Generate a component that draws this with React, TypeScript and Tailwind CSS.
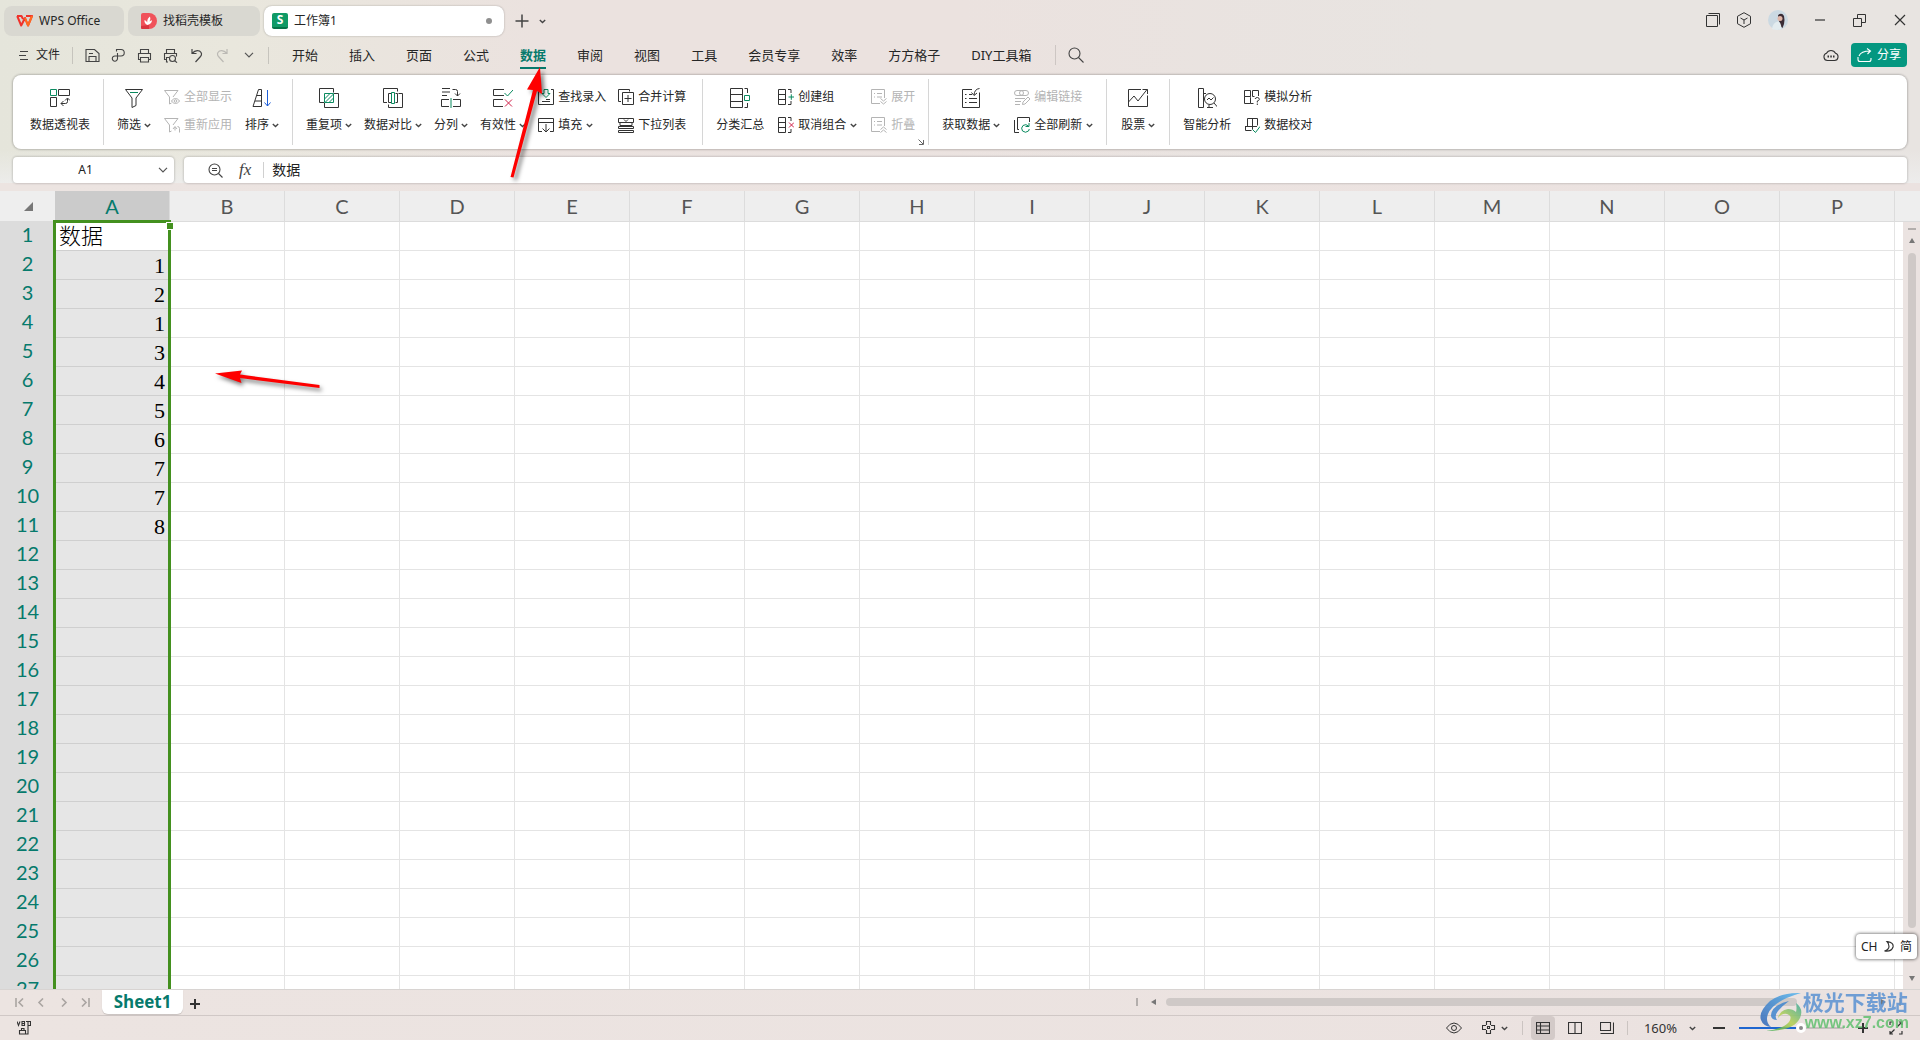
import React from 'react';

const FONT = "font-['Noto_Sans','Noto_Sans_CJK_SC',sans-serif]";
const INK = '#333333';
const GREEN = '#0a8a5f';
const RED = '#cf2149';
const GREY = '#b4b4b4';

type IconProps = { size?: number; color?: string; width?: number; children: React.ReactNode };

const Icon: React.FC<IconProps> = ({ size = 16, color = INK, width = 1, children }) => (
    <svg width={size} height={size} viewBox={`0 0 ${size} ${size}`} fill="none" stroke={color} strokeWidth={width} className="shrink-0" aria-hidden="true">
        {children}
    </svg>
);

const Chevron: React.FC<{ wide?: boolean }> = ({ wide }) =>
    wide ? (
        <svg width="10" height="6" viewBox="0 0 10 6" fill="none" stroke="#555" strokeWidth="1.2" className="shrink-0"><path d="M1 .8l4 4 4-4" /></svg>
    ) : (
        <svg width="7" height="5" viewBox="0 0 7 5" fill="none" stroke="#444" strokeWidth="1.4" className="shrink-0"><path d="M.8 1l2.7 2.5L6.2 1" /></svg>
    );

/* ---------- ribbon icons ---------- */

const PivotIcon = () => (
    <Icon size={20}>
        <path d="M.5 1.5h6v6h-6z" stroke={GREEN} />
        <path d="M8.500 7.500V1.500h11v6h-11M.5 9.500h6v9h-6zM17.500 10.500v3q0 2-2 2h-4.500M15 12.500l2.500-2.500 2.500 2.500M13.500 13l-2.500 2.500 2.500 2.500" />
    </Icon>
);
const FilterIcon = () => (
    <Icon size={20}>
        <path d="M1.500 1.500h17M1.500 1.500l6.500 8.500v9.500l4-2V10l6.500-8.500" />
        <path d="M6 4.500h8" stroke={GREEN} />
    </Icon>
);
const ShowAllIcon = () => (
    <Icon color={GREY}>
        <path d="M.5 1.500h13.500L9 8M.5 1.500L5.500 8v7l2-1" />
        <path d="M7.500 12c2-3.300 6-3.300 8 0-2 3.300-6 3.300-8 0z" /><circle cx="11.500" cy="12" r="1.300" />
    </Icon>
);
const ReapplyIcon = () => (
    <Icon color={GREY}>
        <path d="M.5 1.500h13.500L9 8M.5 1.500L5.500 8v7l2-1M9 12l2-2.500 2 2.500M11 10v3.500M15.500 15.500v-4q0-2-2-2" />
    </Icon>
);
const SortIcon = () => (
    <Icon size={20}>
        <path d="M6.500 1.500h3v17H1zM5 7.500h4.500M3 13h6.500" />
        <path d="M15.500 2v16M12.500 14.500l3 3.500 3-3.500" stroke="#1f5fd8" />
    </Icon>
);
const DuplicateIcon = () => (
    <Icon size={20}>
        <path d="M5 14.500H.5V.500h14v4M15 5.500h4.500v14h-14V15" />
        <path d="M5.500 5.500h9v9h-9zM5.500 11l5.500-5.500M6 14.500l8.500-8.500M10 14.500l4.500-4.500" stroke={GREEN} />
    </Icon>
);
const CompareIcon = () => (
    <Icon size={20}>
        <path d="M4 14.500H.5V.5h14v3M15.500 5.500h4v14h-14v-3M8 5.500H5.500v9H8M12.500 5.500h2v9h-2" />
        <path d="M8.500 4.500h3v11h-3z" stroke={GREEN} />
    </Icon>
);
const SplitIcon = () => (
    <Icon size={20}>
        <path d="M1 .5h8M1 4h8M1 7.500h5M11.500 1.500h3q2 0 2 2v4.500M14 5.500l2.500 2.500L19 5.500M8 11.500H.5v7H8M12 11.500h7.500v7H12" />
        <path d="M10 10v10" stroke={GREEN} />
    </Icon>
);
const ValidityIcon = () => (
    <Icon size={20}>
        <path d="M11 1.500H.5v6H11M10 11.500H.5v7H10" />
        <path d="M11.500 5l3 3L20 2" stroke={GREEN} /><path d="M12 11.500l7 7M19 11.500l-7 7" stroke={RED} />
    </Icon>
);
const LookupIcon = () => (
    <Icon>
        <path d="M3 .5H.5v15h15V.5H13M4 12.500h8M8 10.500h4" />
        <path d="M6 .5h4v4h2L8 8.500 4 4.500h2z" stroke={GREEN} />
    </Icon>
);
const FillIcon = () => (
    <Icon><path d="M4 14.500H.5v-13h15v13H12M.5 5.500h15M8 7v8M4.500 11.500L8 15l3.500-3.500" /></Icon>
);
const ConsolidateIcon = () => (
    <Icon><path d="M3 12.500H.5V.5h11v2M4.500 3.500h11v12h-11zM10 6v7M6.500 9.500h7" /></Icon>
);
const DropListIcon = () => (
    <Icon><path d="M.5 1.500h15v4H.5zM6 2.500l2 2 2-2M2 6v2.500h12V6M.5 9.500h15v2H.5zM.5 13.500h15v2H.5z" /></Icon>
);
const SubtotalIcon = () => (
    <Icon size={20}>
        <path d="M.5.5h12v19H.5zM.5 6.500h12M.5 13.500h12M14.500.5h3V5M14.500 19.500h3V15" />
        <path d="M14.500 7.500h5v5h-5z" stroke={GREEN} />
    </Icon>
);
const GroupIcon = () => (
    <Icon>
        <path d="M.5.5h7v15h-7zM.5 5.500h7M.5 10.500h7M10 .5h3V4M10 15.500h3V12" />
        <path d="M10.500 8h5.500M13.300 5.300v5.500" stroke={GREEN} />
    </Icon>
);
const UngroupIcon = () => (
    <Icon>
        <path d="M.5.5h7v15h-7zM.5 5.500h7M.5 10.500h7M10 .5h3V4M10 15.500h3V12" />
        <path d="M11 5.500l5 5M16 5.500l-5 5" stroke={RED} />
    </Icon>
);
const ExpandIcon = () => (
    <Icon color={GREY}><path d="M9 14.500H.5V.5h13V9M3 4.500h1M6 4.500h5M3 8h1M6 8h5M9.500 9.500l3 2.500 3-2.500M9.500 12.500l3 2.500 3-2.500" /></Icon>
);
const CollapseIcon = () => (
    <Icon color={GREY}><path d="M9 14.500H.5V.5h13V9M3 4.500h1M6 4.500h5M3 8h1M6 8h5M9.500 12.500l3-2.500 3 2.500M9.500 15.500l3-2.500 3 2.500" /></Icon>
);
const GetDataIcon = () => (
    <Icon size={20}><path d="M11 1.500H1.500v18h17V4.500M4 6.500h1.500M4 10.500h1.500M4 14.500h1.500M8 6.500h3M8 10.500h8M8 14.500h8M18.500.5q-5 .5-5.500 6.500M10.500 4.500L13 7.500l3-2.500" /></Icon>
);
const EditLinkIcon = () => (
    <Icon color={GREY}>
        <rect x=".5" y="1.500" width="9" height="5" rx="2.500" /><rect x="5.500" y="1.500" width="9" height="5" rx="2.500" />
        <path d="M1 9.500h10M1 12.500h6M1 15.500h5M8.500 15.500l.5-2.500 5-5 2 2-5 5z" />
    </Icon>
);
const RefreshAllIcon = () => (
    <Icon>
        <path d="M3.500 12.500V.5h12V5M3.500 12.500H5M.500 3v12.500H5" />
        <path d="M14.500 9q-2.500-2.500-5.500-.5-2.500 2.500-.5 5.500 3 2.500 6 0l.8-2M15 6v3.500h-3.500" stroke={GREEN} />
    </Icon>
);
const StockIcon = () => (
    <Icon size={20}><path d="M13 1.500H.5v17h19V7.500M.5 14l5.500-6 4 5L19 1.500M14.500 1.500h5v4.500" /></Icon>
);
const SmartIcon = () => (
    <Icon size={20}>
        <path d="M1.500 19.500V.500h5v19zM6.500 5.500H9M10 19.500h6M12 17v2.500" />
        <circle cx="13" cy="11" r="5.500" /><path d="M17 15l3.500 4M10 12l2-2 2 2 2.500-2.500" />
    </Icon>
);
const SimulateIcon = () => (
    <Icon><path d="M.5 1.500h6v6h-6zM14.500 7V1.500h-6v6h2M.5 9v5.500h6v-6M.5 7.500V9M6.500 7.500v1M6.500 14.500h3M11 10q.5-1.500 2.500-1.500 2 .3 1.800 2-.3 1.200-2 1.500v1.500M13.300 14.500v1.500" /></Icon>
);
const ProofIcon = () => (
    <Icon>
        <path d="M3.500 1.500h10v7M3.500 1.500v8M8.500 1.500v11M1 9.500h12M1.500 9.500v4h6" />
        <path d="M8.500 12.500l3 3 4.500-6" stroke={GREEN} />
    </Icon>
);

/* ---------- ribbon parts ---------- */

const Big: React.FC<{ icon: React.ReactNode; label: string; menu?: boolean }> = ({ icon, label, menu }) => (
    <button className="flex shrink-0 flex-col items-center gap-[9px] pt-[9px]">
        {icon}
        <span className="flex h-4 items-center gap-[3px] whitespace-nowrap leading-4">
            {label}
            {menu && <Chevron />}
        </span>
    </button>
);

const Small: React.FC<{ icon: React.ReactNode; label: string; menu?: boolean; disabled?: boolean }> = ({ icon, label, menu, disabled }) => (
    <button disabled={disabled} className="flex h-4 items-center gap-1 whitespace-nowrap leading-4 disabled:text-[#b4b4b4]">
        {icon}
        {label}
        {menu && <Chevron />}
    </button>
);

const Pair: React.FC<{ children: React.ReactNode }> = ({ children }) => (
    <div className="flex shrink-0 flex-col gap-3 pt-2.5">{children}</div>
);

const Group: React.FC<{ children: React.ReactNode; spacing?: string; last?: boolean }> = ({ children, spacing = 'gap-[13px] px-[13px]', last }) => (
    <div className={`relative flex shrink-0 ${spacing} ${last ? '' : 'border-r border-[#d6d6d6]'}`}>
        {children}
    </div>
);

const Ribbon = () => (
    <section className="mx-[13px] mt-1 flex h-[74px] rounded-lg bg-white py-1 pl-1 text-xs text-[#262626] shadow-[0_0_2px_1px_rgba(0,0,0,0.2)]">
        <Group><Big icon={<PivotIcon />} label="数据透视表" /></Group>
        <Group>
            <Big icon={<FilterIcon />} label="筛选" menu />
            <Pair>
                <Small icon={<ShowAllIcon />} label="全部显示" disabled />
                <Small icon={<ReapplyIcon />} label="重新应用" disabled />
            </Pair>
            <Big icon={<SortIcon />} label="排序" menu />
        </Group>
        <Group spacing="gap-3 pl-[13px] pr-4">
            <Big icon={<DuplicateIcon />} label="重复项" menu />
            <Big icon={<CompareIcon />} label="数据对比" menu />
            <Big icon={<SplitIcon />} label="分列" menu />
            <Big icon={<ValidityIcon />} label="有效性" menu />
            <Pair>
                <Small icon={<LookupIcon />} label="查找录入" />
                <Small icon={<FillIcon />} label="填充" menu />
            </Pair>
            <Pair>
                <Small icon={<ConsolidateIcon />} label="合并计算" />
                <Small icon={<DropListIcon />} label="下拉列表" />
            </Pair>
        </Group>
        <Group spacing="gap-[14px] px-[13px]">
            <Big icon={<SubtotalIcon />} label="分类汇总" />
            <Pair>
                <Small icon={<GroupIcon />} label="创建组" />
                <Small icon={<UngroupIcon />} label="取消组合" menu />
            </Pair>
            <Pair>
                <Small icon={<ExpandIcon />} label="展开" disabled />
                <Small icon={<CollapseIcon />} label="折叠" disabled />
            </Pair>
            <svg className="absolute right-1 bottom-0" width="6" height="6" viewBox="0 0 6 6" fill="none" stroke="#666"><path d="M.5.5l4.500 4.500M5.500 1v4.500H1" /></svg>
        </Group>
        <Group spacing="gap-[14px] px-[13px]">
            <Big icon={<GetDataIcon />} label="获取数据" menu />
            <Pair>
                <Small icon={<EditLinkIcon />} label="编辑链接" disabled />
                <Small icon={<RefreshAllIcon />} label="全部刷新" menu />
            </Pair>
        </Group>
        <Group spacing="px-[14px]"><Big icon={<StockIcon />} label="股票" menu /></Group>
        <Group last>
            <Big icon={<SmartIcon />} label="智能分析" />
            <Pair>
                <Small icon={<SimulateIcon />} label="模拟分析" />
                <Small icon={<ProofIcon />} label="数据校对" />
            </Pair>
        </Group>
    </section>
);

/* ---------- title bar and menu ---------- */

const TitleBar = () => (
    <div className="flex h-10 items-start pl-1 text-xs text-[#262626]">
        <div className="flex items-center gap-1 pt-1.5">
            <button className="flex h-[30px] w-[120px] items-center gap-1.5 rounded-lg bg-[#d9d8d1] pl-3">
                <svg width="17" height="12" viewBox="0 0 17 12" fill="none" stroke="#f0322b" strokeWidth="2" strokeLinejoin="round">
                    <path d="M1 1h4.500l1.500 3M1.200 1l4 9.500L9 3l3 7.500L16 1h-6" />
                    <path d="M9 3l3 7.500L16 1" stroke="#ff6a1f" />
                </svg>
                WPS Office
            </button>
            <button className="flex h-[30px] w-[132px] items-center gap-1.5 rounded-lg bg-[#d9d8d1] pl-[13px]">
                <svg width="16" height="16" viewBox="0 0 16 16">
                    <path d="M2 0h6a8 8 0 0 1 0 16H1.500A1.500 1.500 0 0 1 0 14.500V2a2 2 0 0 1 2-2z" fill="#f0525a" />
                    <path d="M0 13l8-1v4H1.500A1.500 1.500 0 0 1 0 14.500z" fill="#d93640" />
                    <path d="M6.500 12Q3 10.500 3.500 7q2 .8 2.700 2.500Q6 5.500 9 3.500q1 2.500-.5 5 1-1 2.500-1.200Q10.800 11 6.500 12z" fill="#fff" />
                </svg>
                找稻壳模板
            </button>
            <button className="flex h-[30px] w-[240px] items-center gap-1.5 rounded-lg bg-white pr-3 pl-2 shadow-[0_0_2px_rgba(0,0,0,0.3)]">
                <span className="flex size-4 items-center justify-center rounded-xs border-b-2 border-[#077348] bg-[#109a66] text-xs leading-3 font-bold text-white">S</span>
                工作簿1
                <span className="ml-auto size-1.5 rounded-full bg-[#8f8f8f]" />
            </button>
        </div>
        <div className="flex items-center gap-2.5 pt-[14px] pl-[11px]">
            <button aria-label="+"><Icon size={14} color="#444" width={1.5}><path d="M7 .5v13M.5 7h13" /></Icon></button>
            <button aria-label="v"><Chevron /></button>
        </div>
        <div className="ml-auto flex items-center gap-4 pt-[10px] pr-[14px]">
            <Icon size={14}><path d="M.5 2.500h11v11H.5zM2.500.5h11v11" /></Icon>
            <Icon size={16}><path d="M8 .7l6.500 3.600v7.400L8 15.300l-6.500-3.600V4.300zM4.500 6L8 8l3.500-2M8 8v4" /></Icon>
            <svg width="20" height="20" viewBox="0 0 20 20">
                <circle cx="10" cy="10" r="10" fill="#cbd9e2" />
                <path d="M10 5q4-3 6 1 1 4 0 8l-1.500 4-2.500-2z" fill="#3b2c35" />
                <circle cx="12" cy="8.500" r="2.500" fill="#e0b6a8" />
                <path d="M4 19q1-7 6-7.500 3 0 3.500 7.500-4 2-9.500 0z" fill="#e3ecef" />
            </svg>
            <div className="flex items-center gap-7 pl-[11px]">
                <button aria-label="–"><Icon size={10} width={1.2}><path d="M0 5h10" /></Icon></button>
                <button aria-label="□"><Icon size={13}><path d="M.5 4.500h8v8h-8zM4.500 4V.5h8v8H9" /></Icon></button>
                <button aria-label="×"><Icon size={12} width={1.200}><path d="M1 1l10 10M11 1L1 11" /></Icon></button>
            </div>
        </div>
    </div>
);

const MENU = ['开始', '插入', '页面', '公式', '数据', '审阅', '视图', '工具', '会员专享', '效率', '方方格子', 'DIY工具箱'];

const MenuBar = () => (
    <nav className="flex h-[31px] items-start text-[13px] text-[#262626]">
        <div className="flex h-[30px] items-center pl-[19px]">
            <button className="flex items-center gap-2 text-xs">
                <Icon size={9} color="#444"><path d="M1 .5h8M0 4.500h7M1 8.500h8" /></Icon>
                文件
            </button>
            <span className="ml-3 h-[17px] w-px bg-[#c6c4bd]" />
            <div className="flex items-center gap-[11px] pl-3">
                <Icon size={15} color="#444" width={1.1}><path d="M1 1.500h8.500l4.500 4v8H1zM4 13.500v-5h7v5M4 5.500h4" /></Icon>
                <Icon size={15} color="#444" width={1.1}><path d="M5.500 3.500V1.500h4.500a3.200 3.200 0 0 1 0 6.500H4a2.600 2.600 0 1 0 2.500 2.600V5" /></Icon>
                <Icon size={15} color="#444" width={1.1}><path d="M3.500 5V1.500h8V5M3.500 11.500h-2v-6h12v6h-2M3.500 9.500h8v4.500h-8z" /></Icon>
                <Icon size={15} color="#444" width={1.1}><path d="M3.500 5V1.500h8V5M3.500 11.500h-2v-6h12v3M5 14H3.500V9.500H6" /><circle cx="9.500" cy="10.500" r="3" /><path d="M11.700 12.700l2.300 2" /></Icon>
                <Icon size={15} color="#444" width={1.2}><path d="M3 1v4.500h4.500M3 5.500q3.500-4 7.500-2.500 3.500 2.500 1 5.500L6.500 14" /></Icon>
                <Icon size={15} color="#bbb9b4" width={1.2}><path d="M12 1v4.500H7.500M12 5.500q-3.500-4-7.500-2.500-3.500 2.500-1 5.500L8.500 14" /></Icon>
                <span className="flex w-[15px] justify-center"><Chevron wide /></span>
            </div>
            <span className="ml-3 h-[17px] w-px bg-[#c6c4bd]" />
        </div>
        <div className="flex gap-[31px] pl-[23px]">
            {MENU.map((m) => (
                <button
                    key={m}
                    className={`h-[29px] border-b-2 pt-1 leading-[23px] whitespace-nowrap ${m === '数据' ? 'border-[#067a6c] font-bold text-[#067a6c]' : 'border-transparent'}`}
                >
                    {m}
                </button>
            ))}
        </div>
        <div className="flex h-[30px] items-center gap-3 pl-6">
            <span className="h-5 w-px bg-[#cdc6c3]" />
            <Icon size={16} color="#444" width={1.1}><circle cx="6.500" cy="6.500" r="5.500" /><path d="M10.500 10.500l5 5" /></Icon>
        </div>
        <div className="ml-auto flex h-[30px] items-center gap-3 pr-[13px]">
            <Icon size={16} width={1.100}>
                <path d="M4.500 13.500a3.700 3.700 0 0 1-1-7.200 5 5 0 0 1 9 0 3.700 3.700 0 0 1-1 7.200z" /><path d="M4.500 9.500h1.500M7.300 9.500h1.500M10 9.500h1.500" strokeWidth="1.800" />
            </Icon>
            <button className="flex h-6 items-center gap-[5px] rounded bg-[#049780] px-1.5 text-xs text-white">
                <Icon size={15} color="#fff" width={1.100}><path d="M1 9v2.500q0 2 2 2h9q2 0 2-2V10M2 8q2-5 11-5M10 .500L13.500 3 10.500 6" /></Icon>
                分享
            </button>
        </div>
    </nav>
);

const FormulaBar = () => (
    <div className="mx-[13px] mt-2 flex gap-2.5 text-[#222]">
        <div className="flex h-[26px] w-[161px] items-center rounded bg-white pr-1.5 shadow-[0_0_2px_1px_rgba(0,0,0,0.14)]">
            <input aria-label="A1" defaultValue="A1" className="min-w-0 flex-1 bg-transparent text-center text-xs outline-none" />
            <Chevron wide />
        </div>
        <div className="flex h-[26px] flex-1 items-center rounded bg-white pl-6 shadow-[0_0_2px_1px_rgba(0,0,0,0.14)]">
            <Icon size={15} color="#444" width={1.100}><circle cx="6.500" cy="6.500" r="5.500" /><path d="M10.500 10.500l4 4M4 5.500h5M4 7.500h5" /></Icon>
            <span className="pl-4 font-['Liberation_Serif',serif] text-[17px] leading-5 text-[#444] italic">fx</span>
            <span className="mr-2 ml-3 h-4 w-px bg-[#d0d0d0]" />
            <input aria-label="fx" defaultValue="数据" className="h-6 flex-1 bg-transparent pb-[3px] text-sm outline-none" />
        </div>
    </div>
);

/* ---------- sheet ---------- */

const COLUMNS = 'ABCDEFGHIJKLMNOP'.split('');
const VALUES = ['数据', 1, 2, 1, 3, 4, 5, 6, 7, 7, 8];

const Sheet = () => (
    <div className="mt-2 flex min-h-0 flex-1 border-b border-[#d8d4d2] bg-white">
        <div className="relative min-w-0 flex-1 overflow-hidden">
            <table className="w-[2010px] table-fixed border-separate border-spacing-0">
                <colgroup>
                    <col className="w-[55px]" />
                    {COLUMNS.map((c) => <col key={c} className="w-[115px]" />)}
                    <col className="w-[115px]" />
                </colgroup>
                <thead>
                    <tr className="h-[31px] bg-[#eeeeee] font-['Lato',sans-serif] text-xl leading-7 text-[#555]">
                        <th className="border-b border-[#dcdcdc] p-0">
                            <svg className="ml-6" width="9" height="9" viewBox="0 0 9 9"><path d="M9 0v9H0z" fill="#777" /></svg>
                        </th>
                        {COLUMNS.map((c) => (
                            <th key={c} scope="col" className={`border-r border-b border-[#dcdcdc] p-0 font-normal ${c === 'A' ? 'bg-[#cbcbcb] text-[#067a6c]' : ''}`}>{c}</th>
                        ))}
                        <th className="border-b border-[#dcdcdc] p-0" />
                    </tr>
                </thead>
                <tbody>
                    {Array.from({ length: 27 }, (_, r) => (
                        <tr key={r} className="h-[29px]">
                            <th scope="row" className="bg-[#dcdcdc] p-0 align-top font-['Lato',sans-serif] text-xl leading-6 font-normal text-[#067a6c]">{r + 1}</th>
                            <td className={`border-b border-[#cfcfcf] px-1 py-0 align-bottom font-['Liberation_Serif','Noto_Sans_CJK_SC',serif] text-[22px] leading-[26px] font-light text-black ${r === 0 ? 'bg-white' : 'bg-[#e6e6e6] pr-[5px] text-right'}`}>
                                {VALUES[r]}
                            </td>
                            {COLUMNS.map((c) => <td key={c} className="border-r border-b border-[#e4e4e4] p-0" />)}
                        </tr>
                    ))}
                </tbody>
            </table>
            <div className="absolute top-[29px] bottom-0 left-[53px] w-[118px] border-3 border-b-0 border-[#43901f]" />
            <div className="absolute top-[31px] left-[166px] size-2 border border-white bg-[#43901f]" />
            <svg className="absolute top-[175px] left-[210px] drop-shadow-[2px_3px_2px_rgba(0,0,0,0.5)]" width="120" height="30" viewBox="0 0 120 30" fill="#fe0000">
                <path d="M5 7.500L32 4.500l-2 4L109.500 19v3L30 12l1.500 5z" />
            </svg>
        </div>
        <div className="flex w-[17px] shrink-0 flex-col items-center bg-[#ebe3e1]">
            <div className="h-[31px] w-full border-b border-[#dcdcdc] bg-[#eeeeee]" />
            <span className="mt-1.5 h-0.5 w-2 bg-[#b3aeac]" />
            <svg className="mt-2 mb-2.5" width="6" height="5"><path d="M3 0l3 5H0z" fill="#777" /></svg>
            <span className="w-2 flex-1 rounded-full bg-[#cfc9c7]" />
            <svg className="mt-12 mb-2" width="6" height="5"><path d="M0 0h6L3 5z" fill="#777" /></svg>
        </div>
    </div>
);

const SheetTabs = () => (
    <div className="flex h-[26px] items-start border-b border-[#d0c8c6]">
        <div className="flex h-6 w-[102px] items-center gap-[13px] pl-[15px]">
            <Icon size={9} color="#aaa5a2" width={1.600}><path d="M1 0v9M8 .5l-4 4 4 4" /></Icon>
            <Icon size={9} color="#aaa5a2" width={1.600}><path d="M6 .5l-4 4 4 4" /></Icon>
            <Icon size={9} color="#aaa5a2" width={1.600}><path d="M3 .5l4 4-4 4" /></Icon>
            <Icon size={9} color="#aaa5a2" width={1.600}><path d="M8 0v9M1 .5l4 4-4 4" /></Icon>
        </div>
        <button className="h-6 w-[81px] rounded-b-md bg-white font-['Open_Sans',sans-serif] text-[17px] leading-6 font-bold text-[#067a6c] shadow-[0_1px_1px_rgba(0,0,0,0.15)]">Sheet1</button>
        <button aria-label="+" className="flex h-7 items-center pl-[7px]"><Icon size={10} width={2}><path d="M5 0v10M0 5h10" /></Icon></button>
        <div className="ml-auto flex h-6 w-[784px] items-center pr-[19px]">
            <span className="mr-[13px] h-2 w-0.5 bg-[#b3aeac]" />
            <svg width="5" height="6"><path d="M5 0v6L0 3z" fill="#777" /></svg>
            <span className="mx-2.5 h-2 w-[631px] rounded-full bg-[#cfc9c7]" />
            <svg className="ml-auto" width="5" height="6"><path d="M0 0v6l5-3z" fill="#777" /></svg>
            <span className="ml-[13px] h-2 w-0.5 bg-[#b3aeac]" />
        </div>
    </div>
);

const StatusBar = () => (
    <footer className="flex h-6 items-center px-[17px] text-[#333]">
        <Icon size={14} width={1.100}><path d="M0 .5l1.500 4L3 .5M5 .5v4h2.500v-4zM5 2.500h2.500M9 .5h4.500v4H11M11 0v13H2.500V9.500H8.500v3M4.500 9.500v-2H7v2" /></Icon>
        <div className="ml-auto flex items-center">
            <Icon size={16}><path d="M.5 8q3.500-5 7.500-5t7.500 5q-3.500 5-7.500 5T.500 8z" /><circle cx="8" cy="8" r="2.500" /></Icon>
            <button aria-label="+" className="ml-5 flex items-center gap-[5px]">
                <Icon size={14} width={1.100}><path d="M4.500 4V.5h4V4M4.500 9v3.500h4V9M4 4.500H.5v4H4M9 4.500h3.500v4H9M5.500 5.500h2v2h-2z" /></Icon>
                <Chevron />
            </button>
            <span className="mr-2 ml-[14px] h-[14px] w-px bg-[#cbc4c1]" />
            <button aria-label="1" className="flex size-6 items-center justify-center rounded bg-[#d3cac8]"><Icon size={14} width={1.100}><path d="M.5 1.500h13v11H.5zM.5 5h13M.5 9h13M4.500 1.500v11" /></Icon></button>
            <button aria-label="2" className="ml-2 flex size-6 items-center justify-center"><Icon size={14} width={1.100}><path d="M.5 1.500h13v11H.5zM7 1.500v11" /></Icon></button>
            <button aria-label="3" className="ml-2 flex size-6 items-center justify-center"><Icon size={14} width={1.100}><path d="M.5 9.500v-8h10v8zM.5 12.500h13V1.500" /></Icon></button>
            <span className="mr-4 ml-2 h-[14px] w-px bg-[#cbc4c1]" />
            <button className="flex items-center gap-3 text-[13px] leading-5">
                160%
                <Chevron />
            </button>
            <button aria-label="–" className="ml-[17px]"><Icon size={12} width={2}><path d="M0 6h12" /></Icon></button>
            <input
                type="range"
                aria-label="160%"
                defaultValue={60}
                className="mx-[14px] h-0.5 w-[105px] appearance-none bg-[linear-gradient(to_right,#1f66d0_59%,#c5bfbd_59%)] [&::-webkit-slider-thumb]:size-2.5 [&::-webkit-slider-thumb]:appearance-none [&::-webkit-slider-thumb]:rounded-full [&::-webkit-slider-thumb]:border-3 [&::-webkit-slider-thumb]:border-white [&::-webkit-slider-thumb]:bg-[#8a8a8a]"
            />
            <button aria-label="+"><Icon size={10} width={2}><path d="M5 0v10M0 5h10" /></Icon></button>
            <button aria-label="x" className="ml-[21px]"><Icon size={14} width={1.200}><path d="M1 4V1h3M10 1h3v3M13 10v3h-3M4 13H1v-3M8.500 5.500L12.500 1.500M5.500 8.500L1.500 12.500" /></Icon></button>
        </div>
    </footer>
);

const Watermark = () => (
    <div className="pointer-events-none absolute right-[11px] bottom-[7px] flex items-end whitespace-nowrap opacity-85">
        <svg width="43" height="41" viewBox="0 0 43 41" fill="none">
            <defs>
                <linearGradient id="wmBlue" x1="0" y1="1" x2="1" y2="0"><stop stopColor="#2f62b5" /><stop offset="1" stopColor="#58b7ef" /></linearGradient>
                <linearGradient id="wmGreen" x1="0" y1="1" x2="1" y2="0"><stop stopColor="#2fa84f" /><stop offset=".5" stopColor="#b6cf4f" /><stop offset="1" stopColor="#36a9a0" /></linearGradient>
            </defs>
            <path d="M41 1Q22 0 10 9-2 20 1 28q2 6 10 7-6-5-3-13Q13 9 41 1z" fill="url(#wmBlue)" />
            <path d="M29 9Q12 13 11 23q0 5 6 5-3-4 1-9 4-5 11-10z" fill="#3f86cf" />
            <path d="M36 11q8 6 4 15-6 13-34 13 17-2 23-9 4-6-2-8-5-1-9 4 2-8 10-9 5 0 8 3 1-4 0-9z" fill="url(#wmGreen)" />
        </svg>
        <div className="flex flex-col">
            <span className="font-['Noto_Sans_CJK_SC',sans-serif] text-[21px] leading-6 font-bold text-[#5a92d2]">极光下载站</span>
            <span className="pl-0.5 font-['Liberation_Sans',sans-serif] text-base leading-5 font-bold text-[#62c070]">www.xz7.com</span>
        </div>
    </div>
);

export default function App() {
    return (
        <div className={`relative flex h-screen flex-col overflow-hidden bg-[linear-gradient(to_right,#ece4e1,#ebe2e0)] ${FONT}`}>
            <header className="bg-[linear-gradient(to_bottom,transparent_150px,#eeeeee_190px),linear-gradient(to_right,#e5e5db,#e9e7dd_12%,#ebe2df_28%,#ebe2df_50%,#e8e4e1_75%,#e8e4e1)]">
                <TitleBar />
                <MenuBar />
                <Ribbon />
                <FormulaBar />
            </header>
            <Sheet />
            <SheetTabs />
            <StatusBar />
            <svg className="pointer-events-none absolute top-[60px] left-[500px] drop-shadow-[3px_3px_2px_rgba(0,0,0,0.5)]" width="60" height="130" viewBox="0 0 60 130" fill="#fe0000">
                <path d="M40 7l2 27-5-3-23.500 86.500-3-.5L33 30l-6-.5z" />
            </svg>
            <div className="absolute right-[3px] bottom-[81px] flex h-[25px] w-[61px] items-center justify-between rounded bg-white px-[5px] text-xs text-[#222] shadow-[0_0_3px_1px_rgba(0,0,0,0.45)]">
                CH
                <Icon size={11} width={1.200}><path d="M4 .5q7 1 6 5.500-1.500 5-8.500 4 4.500-1.500 4.500-4.500Q6 2.500 4 .5z" /></Icon>
                简
            </div>
            <Watermark />
        </div>
    );
}
